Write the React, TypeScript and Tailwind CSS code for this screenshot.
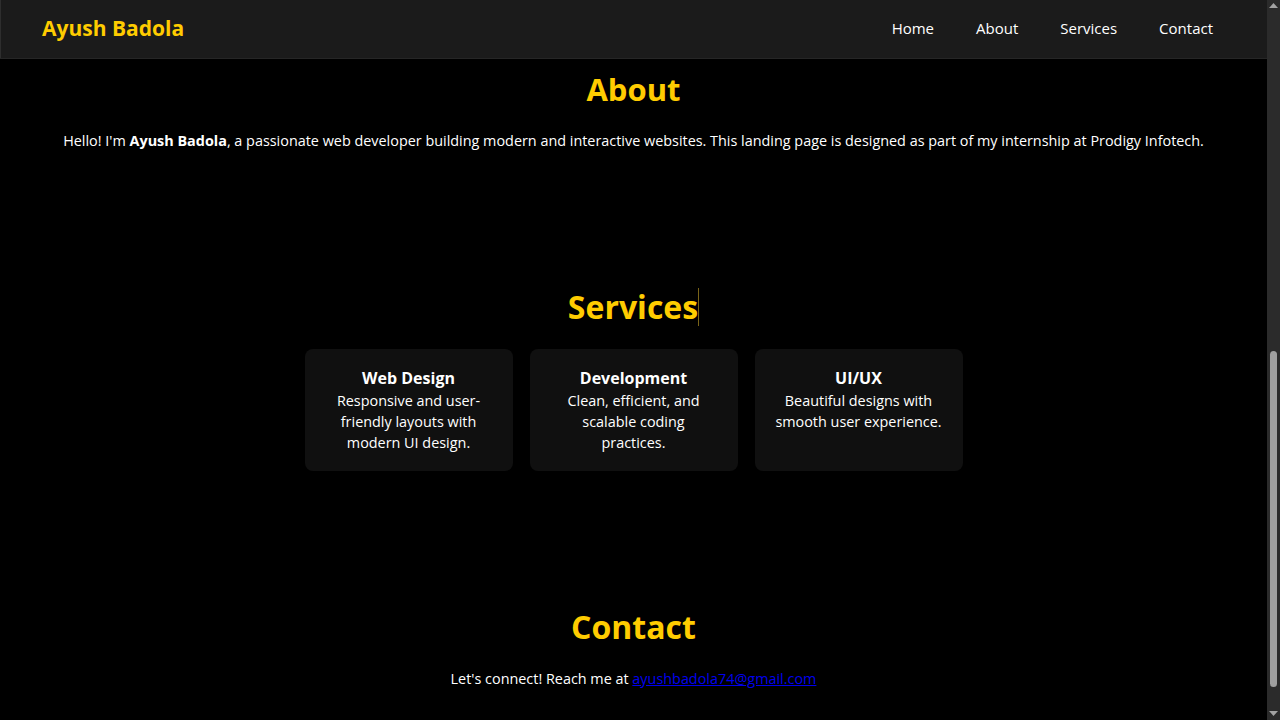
import React from "react";

const cards = [
  { title: "Web Design", desc: "Responsive and user-friendly layouts with modern UI design." },
  { title: "Development", desc: "Clean, efficient, and scalable coding practices." },
  { title: "UI/UX", desc: "Beautiful designs with smooth user experience." },
];

export default function App() {
  return (
    <div className="flex h-[720px] w-[1280px] overflow-hidden bg-black font-['Open_Sans',sans-serif] text-white">
      <div className="flex w-[1267px] flex-col">
        <nav className="flex h-[58px] shrink-0 items-center justify-between border-l border-[#2e2e2e] bg-[#1b1b1b] pb-[2px] pl-[41px] pr-[54px] shadow-[0_1px_0_#262626]">
          <span className="text-[21px] font-bold leading-none text-[#ffcc00]">Ayush Badola</span>
          <ul className="flex gap-[42px] text-[15px] font-medium leading-none">
            <li>Home</li>
            <li>About</li>
            <li>Services</li>
            <li>Contact</li>
          </ul>
        </nav>

        <section className="flex flex-col items-center pt-[12px]">
          <h2 className="text-[31px] font-bold leading-[38px] text-[#ffcc00]">About</h2>
          <p className="mt-[22px] text-[14.4px] leading-[21px]">
            Hello! I'm <b className="font-bold">Ayush Badola</b>, a passionate web developer building modern and interactive websites. This landing page is designed as part of my internship at Prodigy Infotech.
          </p>
        </section>

        <section className="mt-[137px] flex flex-col items-center">
          <h2 className="border-r border-[#7a6418] text-[32px] font-bold leading-[38px] text-[#ffcc00]">Services</h2>
          <div className="mt-[23px] flex gap-[17px]">
            {cards.map((c) => (
              <div key={c.title} className="w-[208px] rounded-[8px] bg-[#101010] px-5 pb-[18px] pt-5 text-center">
                <h3 className="text-[16px] font-bold leading-[19px]">{c.title}</h3>
                <p className="mt-[2px] text-[14.4px] leading-[21px]">{c.desc}</p>
              </div>
            ))}
          </div>
        </section>

        <section className="mt-[137px] flex flex-col items-center">
          <h2 className="text-[32px] font-bold leading-[38px] text-[#ffcc00]">Contact</h2>
          <p className="mt-[22px] text-[14.4px] leading-[21px]">
            Let's connect! Reach me at{" "}
            <a href="#" className="text-[#0000ee] underline">ayushbadola74@gmail.com</a>
          </p>
        </section>
      </div>

      <div className="flex w-[13px] flex-col items-center bg-[#2b2b2b]">
        <svg width="9" height="6" viewBox="0 0 9 6" className="mt-[3px] fill-[#a3a3a3]">
          <polygon points="4.5,0 9,5 0,5" />
        </svg>
        <div className="mt-[342px] h-[336px] w-[7px] rounded-full bg-[#9f9f9f]" />
        <svg width="9" height="6" viewBox="0 0 9 6" className="mt-auto mb-[3px] fill-[#a3a3a3]">
          <polygon points="0,0 9,0 4.5,5" />
        </svg>
      </div>
    </div>
  );
}
